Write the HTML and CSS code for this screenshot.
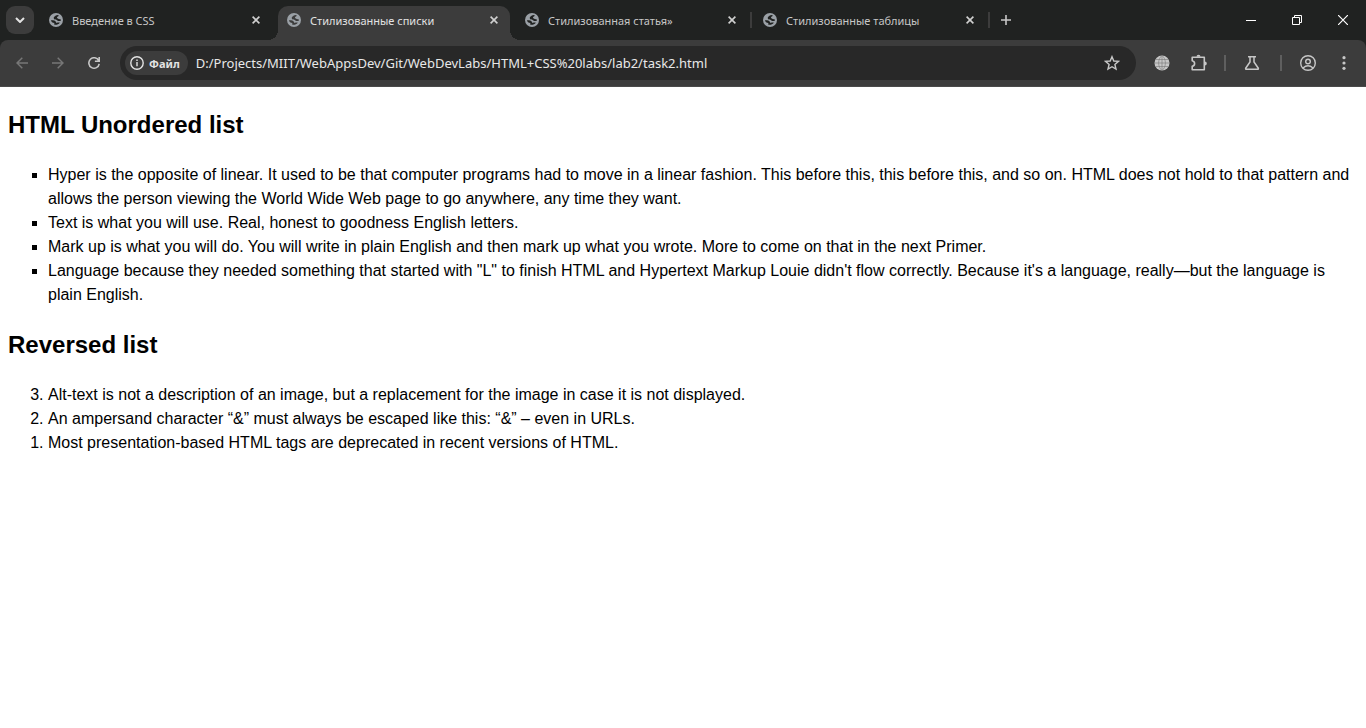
FILE: index.html
```html
<!DOCTYPE html>
<html lang="ru">
<head>
<meta charset="utf-8">
<title>Стилизованные списки</title>
<link rel="stylesheet" href="styles.css">
</head>
<body>
<svg class="defs" aria-hidden="true">
  <symbol id="globe" viewBox="0 0 14 14">
    <circle cx="7" cy="7" r="7" fill="#9aa0a6"/>
    <path class="globe-ink" d="M8.800 2C6.800 2 6.700 3 5.600 3.500C4.600 4 4.500 5.200 5.100 6C5.900 6.800 7.200 6.300 8.100 7.200C8.900 8.100 10.200 8.500 12 7.600C12.100 6.200 11 6.200 10 6C8.800 5.800 7.700 5.200 8 4.300C8.300 3.600 9.800 3.500 9.800 2.500Z"/>
    <path class="globe-ink" d="M1.900 7.200H4C5.800 7.200 7 8.200 7.100 9.700C8.400 9.900 9.700 9.400 10.800 9.700C9.500 11.300 7.600 12.200 5.300 11.700V10C3.600 9.800 2.200 8.800 1.900 7.200Z"/>
  </symbol>
  <symbol id="close" viewBox="0 0 8 8">
    <path d="M.6.6 7.4 7.4M7.4.6.6 7.4" fill="none" stroke="currentColor" stroke-width="1.6"/>
  </symbol>
</svg>

<header class="browser">
  <div class="strip">
    <button class="search" aria-label="Поиск вкладок"><svg width="10" height="6" viewBox="0 0 10 6"><path d="M1 1l4 4 4-4" fill="none" stroke="currentColor" stroke-width="2"/></svg></button>
    <nav class="tabs" aria-label="Вкладки">
      <div class="tab"><svg class="favicon"><use href="#globe"/></svg><button class="title">Введение в CSS</button><button class="close" aria-label="Закрыть"><svg width="8" height="8"><use href="#close"/></svg></button></div>
      <div class="tab active"><svg class="favicon"><use href="#globe"/></svg><button class="title">Стилизованные списки</button><button class="close" aria-label="Закрыть"><svg width="8" height="8"><use href="#close"/></svg></button></div>
      <div class="tab ruled"><svg class="favicon"><use href="#globe"/></svg><button class="title">Стилизованная статья»</button><button class="close" aria-label="Закрыть"><svg width="8" height="8"><use href="#close"/></svg></button></div>
      <div class="tab ruled"><svg class="favicon"><use href="#globe"/></svg><button class="title">Стилизованные таблицы</button><button class="close" aria-label="Закрыть"><svg width="8" height="8"><use href="#close"/></svg></button></div>
    </nav>
    <button class="new" aria-label="Новая вкладка"><svg width="10" height="10" viewBox="0 0 10 10"><path d="M5 0v10M0 5h10" stroke="currentColor" stroke-width="1.6"/></svg></button>
    <div class="window">
      <button aria-label="Свернуть"><svg width="10" height="10"><path d="M0 5.5h10" stroke="currentColor"/></svg></button>
      <button aria-label="Восстановить"><svg width="10" height="10"><path d="M.5 2.5h7v7h-7zM2.5 2.5v-2h7v7h-2" fill="none" stroke="currentColor"/></svg></button>
      <button aria-label="Закрыть окно"><svg width="10" height="10"><path d="M0 0l10 10M10 0L0 10" stroke="currentColor" stroke-width="1.2"/></svg></button>
    </div>
  </div>
  <div class="toolbar">
    <button class="dim" aria-label="Назад"><svg width="12" height="12" viewBox="0 0 12 12"><path d="M12 6H1M6.3.7L1 6l5.300 5.300" fill="none" stroke="currentColor" stroke-width="1.5"/></svg></button>
    <button class="dim" aria-label="Вперёд"><svg width="12" height="12" viewBox="0 0 12 12"><path d="M0 6h11M5.700.7L11 6l-5.300 5.300" fill="none" stroke="currentColor" stroke-width="1.5"/></svg></button>
    <button aria-label="Обновить"><svg width="12" height="12" viewBox="0 0 12 12"><path d="M10.700 3.600A5.200 5.200 0 1 0 11.200 6.800M11.200 0v4.300H6.900" fill="none" stroke="currentColor" stroke-width="1.600"/></svg></button>
    <div class="omnibox">
      <button class="chip"><svg width="14" height="14" viewBox="0 0 14 14"><circle cx="7" cy="7" r="6.200" fill="none" stroke="currentColor" stroke-width="1.400"/><path d="M7 6v4.300M7 3.500v1.500" stroke="currentColor" stroke-width="1.400"/></svg>Файл</button>
      <input class="url" aria-label="Адресная строка" value="D:/Projects/MIIT/WebAppsDev/Git/WebDevLabs/HTML+CSS%20labs/lab2/task2.html">
      <button class="star" aria-label="Добавить в закладки"><svg width="16" height="16" viewBox="0 0 16 16"><path d="M8 1.700l1.800 4.300 4.700.4-3.600 3.100 1.100 4.600L8 11.700l-4 2.400 1.100-4.600L1.500 6.400l4.700-.4z" fill="none" stroke="currentColor" stroke-width="1.400"/></svg></button>
    </div>
    <div class="actions">
      <button aria-label="Переводчик"><svg width="16" height="16" viewBox="0 0 16 16"><circle cx="8" cy="8" r="7.500" fill="currentColor"/><path d="M8 .5v15M1 8h14M2 4.500h12M2 11.500h12M8 .5C3.500 4 3.500 12 8 15.500M8 .5C12.500 4 12.500 12 8 15.500" fill="none" stroke="#777" stroke-width=".6"/></svg></button>
      <button aria-label="Расширения"><svg width="18" height="18" viewBox="0 0 18 18"><path d="M3.200 3.200h12.100V15.800H3.200V12.300C6.400 11.800 6.400 7.200 3.200 6.700z" fill="none" stroke="currentColor" stroke-width="1.600" stroke-linejoin="round"/><path d="M7.500 2.800a2 2 0 0 1 4 0zM15.800 7.500a2 2 0 0 1 0 4z" fill="currentColor"/></svg></button>
      <span class="rule"></span>
      <button aria-label="Эксперименты"><svg width="16" height="16" viewBox="0 0 16 16"><path d="M4 1.700h8M6 2v5L1.700 13.200q-.4 1.100.8 1.100h11q1.200 0 .8-1.100L10 7V2" fill="none" stroke="currentColor" stroke-width="1.500"/></svg></button>
      <span class="rule wide"></span>
      <button aria-label="Профиль"><svg width="16" height="16" viewBox="0 0 16 16"><g fill="none" stroke="currentColor" stroke-width="1.400"><circle cx="8" cy="8" r="7.300"/><circle cx="8" cy="6.500" r="2.300"/><path d="M3 13q5-4.300 10 0"/></g></svg></button>
      <button aria-label="Меню"><svg width="4" height="14" viewBox="0 0 4 14" fill="currentColor"><circle cx="2" cy="1.700" r="1.600"/><circle cx="2" cy="7" r="1.600"/><circle cx="2" cy="12.300" r="1.600"/></svg></button>
    </div>
  </div>
</header>

<main class="page">
  <h2>HTML Unordered list</h2>
  <ul>
    <li>Hyper is the opposite of linear. It used to be that computer programs had to move in a linear fashion. This before this, this before this, and so on. HTML does not hold to that pattern and allows the person viewing the World Wide Web page to go anywhere, any time they want.</li>
    <li>Text is what you will use. Real, honest to goodness English letters.</li>
    <li>Mark up is what you will do. You will write in plain English and then mark up what you wrote. More to come on that in the next Primer.</li>
    <li>Language because they needed something that started with "L" to finish HTML and Hypertext Markup Louie didn't flow correctly. Because it's a language, really—but the language is plain English.</li>
  </ul>
  <h2>Reversed list</h2>
  <ol reversed>
    <li>Alt-text is not a description of an image, but a replacement for the image in case it is not displayed.</li>
    <li>An ampersand character “&amp;” must always be escaped like this: “&amp;” – even in URLs.</li>
    <li>Most presentation-based HTML tags are deprecated in recent versions of HTML.</li>
  </ol>
</main>
</body>
</html>
```
FILE: styles.css
```css
* { box-sizing: border-box; }
body { margin: 0; background: #fff; }
.defs { position: absolute; width: 0; height: 0; }
button, input { border: 0; padding: 0; margin: 0; background: none; color: inherit; font: inherit; }
button { display: flex; align-items: center; justify-content: center; flex: none; }
svg { display: block; flex: none; }

.browser { background: #202221; color: #c7c7c7; font-family: "Segoe UI", "Noto Sans", sans-serif; font-size: 11px; }

.strip { display: flex; align-items: center; height: 40px; padding-left: 6px; }
.search { width: 28px; height: 28px; border-radius: 9px; background: #3c3c3c; color: #e3e3e3; }
.tabs { display: flex; gap: 6px; align-self: stretch; padding: 6px 0 0 6px; flex: 0 1 952px; min-width: 0; }
.tab { position: relative; display: flex; align-items: center; flex: 1 1 0; min-width: 0; padding: 0 8px 6px 9px; --ink: #202221; }
.favicon { width: 14px; height: 14px; }
.globe-ink { fill: var(--ink); }
.title { flex: 1; min-width: 0; margin-left: 9px; justify-content: flex-start; white-space: nowrap; overflow: hidden; }
.close { width: 16px; height: 16px; color: #d0d0d0; }
.active { background: #3c3c3c; color: #e3e3e3; border-radius: 10px 10px 0 0; --ink: #3c3c3c; }
.active::before, .active::after { content: ""; position: absolute; bottom: 0; width: 10px; height: 10px; }
.active::before { right: 100%; background: radial-gradient(circle at 0 0, transparent 10px, #3c3c3c 10px); }
.active::after { left: 100%; background: radial-gradient(circle at 100% 0, transparent 10px, #3c3c3c 10px); }
.ruled::after { content: ""; position: absolute; left: 100%; top: 6px; width: 2px; height: 16px; margin-left: 2px; background: #3c3c3c; }
.new { width: 28px; height: 28px; margin-left: 6px; }
.window { display: flex; align-self: stretch; margin-left: auto; color: #fff; }
.window button { width: 46px; }

.toolbar { display: flex; align-items: center; height: 47px; padding: 0 4px; background: #3c3c3c; border-bottom: 1px solid #4a4a4a; border-radius: 8px 8px 0 0; }
.toolbar > button { width: 36px; height: 34px; }
.toolbar .dim { color: #777; }
.omnibox { display: flex; align-items: center; flex: 1; min-width: 0; height: 34px; margin-left: 8px; padding: 0 16px 0 5px; border-radius: 17px; background: #282828; }
.chip { height: 24px; gap: 5px; padding: 0 8px 0 5px; border-radius: 12px; background: #3c3c3c; color: #e3e3e3; font-weight: 700; }
.url { flex: 1; min-width: 0; margin-left: 8px; color: #e8e8e8; font-size: 13px; }
.actions { display: flex; align-items: center; margin-left: 8px; }
.actions button { width: 36px; height: 34px; }
.rule { width: 2px; height: 16px; margin: 0 8px; background: #5f5f5f; }
.wide { margin-left: 10px; }

.page { padding: 20px 8px; color: #000; font: 16px/24px Arial, "Liberation Sans", sans-serif; }
.page h2 { margin: 0 0 20px; font-size: 24px; line-height: 36px; }
.page ul, .page ol { margin: 0 0 20px; padding-left: 40px; }
.page ul { list-style: square; }
```
